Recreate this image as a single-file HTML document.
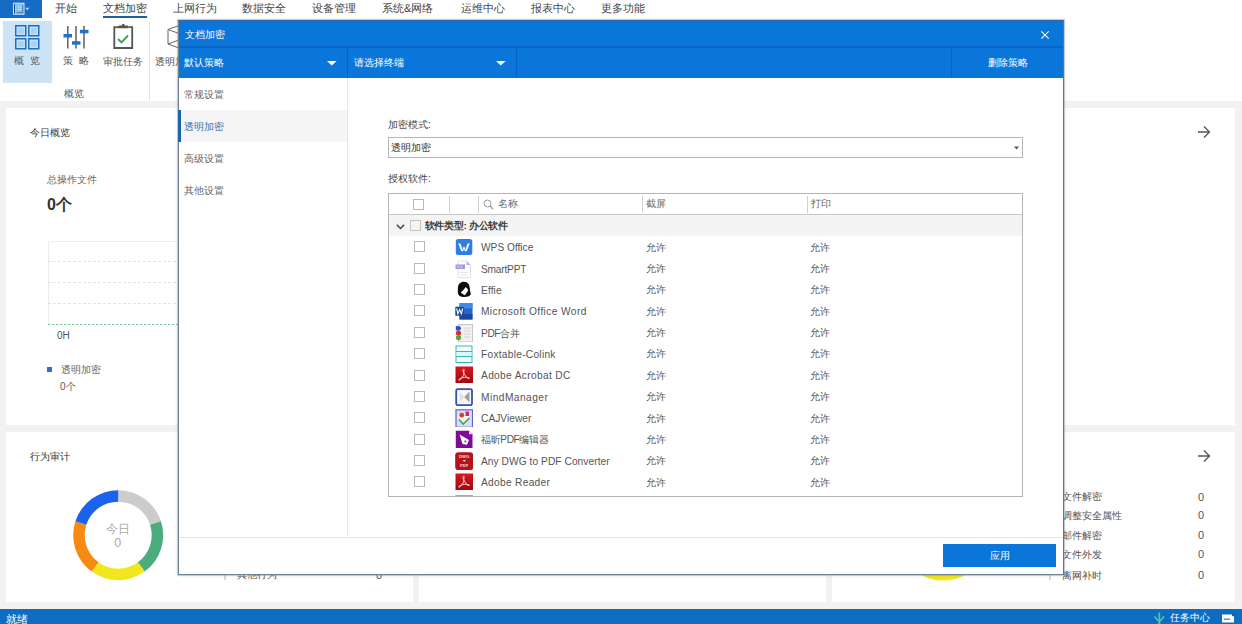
<!DOCTYPE html>
<html><head><meta charset="utf-8">
<style>
*{box-sizing:border-box}
html,body{margin:0;padding:0;width:1242px;height:624px;overflow:hidden;background:#f2f2f2;font-family:"Liberation Sans",sans-serif;color:#333}
.a{position:absolute;white-space:nowrap}
.t{position:absolute;white-space:nowrap;line-height:14px;height:14px}
#menubar{position:absolute;left:0;top:0;width:1242px;height:18px;background:#fff}
#ribbon{position:absolute;left:0;top:18px;width:1242px;height:83px;background:#fff}
.mi{position:absolute;top:1px;font-size:11px;line-height:14px;color:#444;white-space:nowrap}
.panel{position:absolute;background:#fff}
#status{position:absolute;left:0;top:609px;width:1242px;height:15px;background:#0f6dc1;border-top:1px solid #2a6795}
#dlg{position:absolute;left:178px;top:20px;width:886px;height:555px;background:#fff;border:1px solid #6e8391;border-top-color:#2f67a5;border-right-color:#4d79a8;box-shadow:0 0 0 1px rgba(130,150,165,.4),0 0 4px rgba(0,0,0,.15)}
.rl{font-size:10.2px;color:#555}
.cb{width:11px;height:11px;border:1px solid #b8b8b8;background:#fff}
.hd{font-size:10px;color:#666}
.rn{font-size:10.2px;color:#555}
</style></head><body>
<div id="menubar">
  <div class="a" style="left:0;top:0;width:42px;height:18px;background:#166bc5"></div>
  <svg class="a" style="left:12px;top:2px" width="22" height="14" viewBox="0 0 22 14"><rect x="1.5" y="1.2" width="10.5" height="11" fill="#8dbfe8" stroke="#c0e4ff" stroke-width="1.1"/><rect x="2.1" y="1.8" width="1.3" height="9.8" fill="#0d3f7a"/><path d="M3.6 1.8V11.6" stroke="#c0e4ff" stroke-width="0.8"/><path d="M4.5 10.8H11.3M10.8 3V10.8" stroke="#2f5f90" stroke-width="0.8"/><path d="M6 5H9.5M6 7.5H9.5" stroke="#c7e3f7" stroke-width="0.8"/><path d="M13 5.8H17.5L15.25 8.2Z" fill="#a8d8ff"/></svg>
  <div class="mi" style="left:55px">开始</div>
  <div class="mi" style="left:103px">文档加密</div>
  <div class="a" style="left:103px;top:16px;width:44px;height:2px;background:#1a5fa8"></div>
  <div class="mi" style="left:173px">上网行为</div>
  <div class="mi" style="left:242px">数据安全</div>
  <div class="mi" style="left:312px">设备管理</div>
  <div class="mi" style="left:382px">系统&amp;网络</div>
  <div class="mi" style="left:461px">运维中心</div>
  <div class="mi" style="left:531px">报表中心</div>
  <div class="mi" style="left:601px">更多功能</div>
</div>
<div id="ribbon">
  <div class="a" style="left:3px;top:3px;width:49px;height:62px;background:#cde3f6"></div>
  
  <svg class="a" style="left:13px;top:5px" width="28" height="28" viewBox="0 0 28 28">
    <rect x="2.75" y="2.75" width="10" height="10" fill="#a9d1f1" stroke="#1e6fbd" stroke-width="1.5"/>
    <rect x="15.75" y="2.75" width="10" height="10" fill="#a9d1f1" stroke="#1e6fbd" stroke-width="1.5"/>
    <rect x="2.75" y="15.75" width="10" height="10" fill="#a9d1f1" stroke="#1e6fbd" stroke-width="1.5"/>
    <rect x="15.75" y="15.75" width="10" height="10" fill="#a9d1f1" stroke="#1e6fbd" stroke-width="1.5"/>
    <rect x="4.25" y="4.25" width="7" height="7" fill="none" stroke="#d8ecfb" stroke-width="0.8"/>
    <rect x="17.25" y="4.25" width="7" height="7" fill="none" stroke="#d8ecfb" stroke-width="0.8"/>
    <rect x="4.25" y="17.25" width="7" height="7" fill="none" stroke="#d8ecfb" stroke-width="0.8"/>
    <rect x="17.25" y="17.25" width="7" height="7" fill="none" stroke="#d8ecfb" stroke-width="0.8"/>
  </svg>
  <svg class="a" style="left:62px;top:6px" width="28" height="26" viewBox="0 0 28 26">
    <path d="M5.8 2V24.5M14 2V24.5M22 2V24.5" stroke="#555" stroke-width="1.4"/>
    <rect x="1.5" y="10" width="8.5" height="3.5" fill="#1f72c6"/>
    <rect x="10" y="17.2" width="8.5" height="3.5" fill="#1f72c6"/>
    <rect x="18" y="5.8" width="8.5" height="3.5" fill="#1f72c6"/>
  </svg>
  <svg class="a" style="left:111px;top:5px" width="24" height="27" viewBox="0 0 24 27">
    <path d="M7 4.2H3.3V25H21.2V4.2H17.5" fill="none" stroke="#555" stroke-width="1.8"/>
    <path d="M7 5.2H17.5V3.8C17.5 3 16.5 2.5 15 2.5H13.7C13.7 1.5 13 0.8 12.25 0.8C11.5 0.8 10.8 1.5 10.8 2.5H9.5C8 2.5 7 3 7 3.8Z" fill="#555"/>
    <path d="M7 16L10.5 19.5L17 12.5" fill="none" stroke="#3a9f5a" stroke-width="1.9"/>
  </svg>
  <svg class="a" style="left:166px;top:5px" width="14" height="27" viewBox="0 0 14 27">
    <path d="M2 6.5L13 2.5M2 6.5V21L13 25M2 6.5L13 10.5M2 21L13 17" fill="none" stroke="#666" stroke-width="1"/>
  </svg>
  <div class="t rl" style="left:14px;top:36px">概&nbsp;&nbsp;览</div>
  <div class="t rl" style="left:63px;top:36px">策&nbsp;&nbsp;略</div>
  <div class="t rl" style="left:103px;top:37px">审批任务</div>
  <div class="t rl" style="left:155px;top:37px">透明加密</div>
  <div class="t rl" style="left:64px;top:69px">概览</div>
  <div class="a" style="left:149px;top:4px;width:1px;height:79px;background:#e6e6e6"></div>
</div>

<div class="panel" style="left:6px;top:108px;width:407px;height:317px"></div>
<div class="panel" style="left:419px;top:108px;width:407px;height:317px"></div>
<div class="panel" style="left:832px;top:108px;width:403px;height:317px"></div>
<div class="panel" style="left:6px;top:432px;width:407px;height:170px"></div>
<div class="panel" style="left:419px;top:432px;width:407px;height:170px"></div>
<div class="panel" style="left:832px;top:432px;width:403px;height:170px"></div>

<!-- panel 1 content -->
<div class="t" style="left:30px;top:126px;font-size:10px;color:#333">今日概览</div>
<div class="t" style="left:47px;top:173px;font-size:9.6px;color:#666">总操作文件</div>
<div class="t" style="left:47px;top:195.5px;height:18px;line-height:18px;font-size:16px;font-weight:bold;color:#333">0个</div>
<svg class="a" style="left:0;top:0" width="420" height="430">
  <path d="M48.5 241V324" stroke="#ececec" stroke-width="1"/>
  <path d="M48 241.5H420" stroke="#f0f0f0" stroke-width="1"/>
  <path d="M48 261.5H420M48 282.5H420M48 303.5H420" stroke="#e4e4e4" stroke-width="1" stroke-dasharray="3 2"/>
  <path d="M48 324.5H420" stroke="#8fc0a0" stroke-width="1" stroke-dasharray="2.5 1.5"/>
</svg>
<div class="t" style="left:57px;top:328.5px;font-size:10px;color:#555">0H</div>
<div class="a" style="left:47px;top:366.5px;width:5px;height:5px;background:#2f6fd0"></div>
<div class="t" style="left:60.5px;top:362.5px;font-size:9.5px;color:#666">透明加密</div>
<div class="t" style="left:60px;top:380px;font-size:10px;color:#555">0个</div>

<!-- panel 4 content -->
<div class="t" style="left:30px;top:450px;font-size:10px;color:#333">行为审计</div>
<svg class="a" style="left:0;top:0" width="1242" height="608"><path d="M118.20 490.20 A45.0 45.0 0 0 1 161.00 521.29 L150.06 524.85 A33.5 33.5 0 0 0 118.20 501.70 Z" fill="#cccccc"/><path d="M161.00 521.29 A45.0 45.0 0 0 1 144.65 571.61 L137.89 562.30 A33.5 33.5 0 0 0 150.06 524.85 Z" fill="#4cad7c"/><path d="M144.65 571.61 A45.0 45.0 0 0 1 91.75 571.61 L98.51 562.30 A33.5 33.5 0 0 0 137.89 562.30 Z" fill="#f2e61e"/><path d="M91.75 571.61 A45.0 45.0 0 0 1 75.40 521.29 L86.34 524.85 A33.5 33.5 0 0 0 98.51 562.30 Z" fill="#f68a12"/><path d="M75.40 521.29 A45.0 45.0 0 0 1 118.20 490.20 L118.20 501.70 A33.5 33.5 0 0 0 86.34 524.85 Z" fill="#1b62ee"/><path d="M943.30 490.60 A45.0 45.0 0 0 1 986.10 521.69 L975.16 525.25 A33.5 33.5 0 0 0 943.30 502.10 Z" fill="#cccccc"/><path d="M986.10 521.69 A45.0 45.0 0 0 1 969.75 572.01 L962.99 562.70 A33.5 33.5 0 0 0 975.16 525.25 Z" fill="#4cad7c"/><path d="M969.75 572.01 A45.0 45.0 0 0 1 916.85 572.01 L923.61 562.70 A33.5 33.5 0 0 0 962.99 562.70 Z" fill="#f2e61e"/><path d="M916.85 572.01 A45.0 45.0 0 0 1 900.50 521.69 L911.44 525.25 A33.5 33.5 0 0 0 923.61 562.70 Z" fill="#f68a12"/><path d="M900.50 521.69 A45.0 45.0 0 0 1 943.30 490.60 L943.30 502.10 A33.5 33.5 0 0 0 911.44 525.25 Z" fill="#1b62ee"/>
  <rect x="224" y="570" width="2" height="10" fill="#d8d8d8"/>
  <rect x="1049" y="570" width="2" height="10" fill="#d8d8d8"/>
</svg>
<div class="t" style="left:106.3px;top:522px;font-size:12px;color:#aaa">今日</div>
<div class="t" style="left:114.3px;top:536.2px;font-size:12.5px;color:#aaa">0</div>
<div class="t" style="left:237px;top:568px;font-size:10px;color:#555">其他行为</div>
<div class="t" style="left:376px;top:567.5px;font-size:11px;color:#555">0</div>

<!-- panel 3/6 -->
<svg class="a" style="left:1197px;top:125px" width="14" height="14" viewBox="0 0 14 14"><path d="M1 7H12.5M7 1.5L12.5 7L7 12.5" fill="none" stroke="#555" stroke-width="1.3"/></svg><svg class="a" style="left:1197px;top:449px" width="14" height="14" viewBox="0 0 14 14"><path d="M1 7H12.5M7 1.5L12.5 7L7 12.5" fill="none" stroke="#555" stroke-width="1.3"/></svg>
<div class="t" style="left:1062px;top:490px;font-size:10px;color:#555">文件解密</div>
<div class="t" style="left:1062px;top:509px;font-size:10px;color:#555">调整安全属性</div>
<div class="t" style="left:1062px;top:528.5px;font-size:10px;color:#555">邮件解密</div>
<div class="t" style="left:1062px;top:547.5px;font-size:10px;color:#555">文件外发</div>
<div class="t" style="left:1062px;top:568.5px;font-size:10px;color:#555">离网补时</div>
<div class="t" style="left:1198px;top:489.5px;font-size:11px;color:#555">0</div>
<div class="t" style="left:1198px;top:508px;font-size:11px;color:#555">0</div>
<div class="t" style="left:1198px;top:527.5px;font-size:11px;color:#555">0</div>
<div class="t" style="left:1198px;top:546.5px;font-size:11px;color:#555">0</div>
<div class="t" style="left:1198px;top:567.5px;font-size:11px;color:#555">0</div>

<div id="status">
  <div class="t" style="left:5.5px;top:1.5px;font-size:10.5px;color:#fff">就绪</div>
  <svg class="a" style="left:1153px;top:1.5px" width="13" height="14" viewBox="0 0 13 14"><path d="M6.3 0.5V14" stroke="#5cbfa6" stroke-width="1.7"/><path d="M1.5 4.5L6.3 9.8L11.1 4.5" fill="none" stroke="#5cbfa6" stroke-width="1.7"/><path d="M6.3 11V14" stroke="#5cc27a" stroke-width="2"/></svg>
  <div class="t" style="left:1170px;top:1px;font-size:10px;color:#fff">任务中心</div>
  <svg class="a" style="left:1222px;top:4px" width="13" height="9" viewBox="0 0 13 9"><rect x="0" y="0.5" width="12" height="8" fill="#fff"/><rect x="2" y="4.5" width="6" height="1.5" fill="#7a8ca0"/><rect x="10" y="0" width="2" height="2.2" fill="#1a5fa8"/></svg>
</div>

<div id="dlg">
  <!-- title bar -->
  <div class="a" style="left:0;top:0;width:884px;height:25px;background:#0b76da"></div>
  <div class="a" style="left:0;top:25px;width:884px;height:2px;background:#0964c4"></div>
  <div class="a" style="left:0;top:27px;width:884px;height:30px;background:#0b76da"></div>
  <div class="t" style="left:6px;top:7px;font-size:10px;color:#fff">文档加密</div>
  <svg class="a" style="left:860.5px;top:8.5px" width="10" height="10" viewBox="0 0 10 10"><path d="M1.3 1.3L8.7 8.7M8.7 1.3L1.3 8.7" stroke="#fff" stroke-width="1.1"/></svg>
  <div class="t" style="left:5px;top:35px;font-size:10px;color:#fff">默认策略</div>
  <svg class="a" style="left:147.5px;top:39.5px" width="10" height="5" viewBox="0 0 10 5"><path d="M0 0H9.6L4.8 4.6Z" fill="#fff"/></svg>
  <div class="a" style="left:168px;top:27px;width:1px;height:30px;background:#0862bd"></div>
  <div class="t" style="left:175px;top:35px;font-size:10px;color:#fff">请选择终端</div>
  <svg class="a" style="left:317px;top:39.5px" width="10" height="5" viewBox="0 0 10 5"><path d="M0 0H9.6L4.8 4.6Z" fill="#fff"/></svg>
  <div class="a" style="left:337px;top:27px;width:1px;height:30px;background:#0862bd"></div>
  <div class="a" style="left:772px;top:27px;width:1px;height:30px;background:#0862bd"></div>
  <div class="t" style="left:809px;top:35px;font-size:10px;color:#fff">删除策略</div>

  <!-- left nav -->
  <div class="a" style="left:168px;top:57px;width:1px;height:458px;background:#e8e8e8"></div>
  <div class="t" style="left:5px;top:66.8px;font-size:10.4px;color:#666">常规设置</div>
  <div class="a" style="left:0;top:89px;width:168px;height:32px;background:#f5f5f5"></div>
  <div class="a" style="left:-1px;top:89px;width:3px;height:32px;background:#1a66ad"></div>
  <div class="t" style="left:5px;top:98.8px;font-size:10.4px;color:#3572b5">透明加密</div>
  <div class="t" style="left:5px;top:130.8px;font-size:10.4px;color:#666">高级设置</div>
  <div class="t" style="left:5px;top:162.8px;font-size:10.4px;color:#666">其他设置</div>

  <!-- content -->
  <div class="t" style="left:209px;top:97px;font-size:10px;color:#444">加密模式:</div>
  <div class="a" style="left:209px;top:116px;width:635px;height:21px;border:1px solid #b5b5b5"></div>
  <div class="t" style="left:212px;top:120px;font-size:10px;color:#333">透明加密</div>
  <svg class="a" style="left:835px;top:125px" width="5" height="4" viewBox="0 0 5 4"><path d="M0 0.5H5L2.5 3.5Z" fill="#555"/></svg>
  <div class="t" style="left:209px;top:151px;font-size:10px;color:#444">授权软件:</div>

  <div id="tbl" class="a" style="left:209px;top:172px;width:635px;height:304px;border:1px solid #b5b5b5;overflow:hidden">
    <div class="a" style="left:0;top:20px;width:633px;height:1px;background:#c8c8c8"></div>
    <div class="a cb" style="left:24px;top:4.5px"></div>
    <div class="a" style="left:60px;top:2px;width:1px;height:17px;background:#d0d0d0"></div>
    <div class="a" style="left:89px;top:2px;width:1px;height:17px;background:#d0d0d0"></div>
    <div class="a" style="left:253px;top:2px;width:1px;height:17px;background:#d0d0d0"></div>
    <div class="a" style="left:418px;top:2px;width:1px;height:17px;background:#d0d0d0"></div>
    <svg class="a" style="left:94px;top:5px" width="11" height="11" viewBox="0 0 11 11"><circle cx="4.5" cy="4.5" r="3.5" fill="none" stroke="#9a9a9a" stroke-width="1"/><path d="M7 7L10 10" stroke="#9a9a9a" stroke-width="1.2"/></svg>
    <div class="t hd" style="left:109px;top:3px">名称</div>
    <div class="t hd" style="left:257px;top:3px">截屏</div>
    <div class="t hd" style="left:422px;top:3px">打印</div>
    <div class="a" style="left:0;top:21px;width:633px;height:20.5px;background:#f4f4f4"></div>
    <svg class="a" style="left:6.5px;top:29.5px" width="9" height="6" viewBox="0 0 9 6"><path d="M0.8 0.8L4.5 4.5L8.2 0.8" fill="none" stroke="#444" stroke-width="1.5"/></svg>
    <div class="a cb" style="left:21px;top:26px;background:transparent;border-color:#c4c4c4"></div>
    <div class="t" style="left:35.5px;top:25.2px;font-size:9.7px;font-weight:bold;color:#3a3a3a;letter-spacing:-0.25px">软件类型: 办公软件</div>
    <div class="a cb" style="left:25px;top:47.40px"></div>
    <div class="a" style="left:66px;top:44.30px;width:18px;height:18px"><svg width="18" height="18" viewBox="0 0 18 18"><rect x="0.8" y="1" width="16.5" height="16" rx="2.5" fill="#2f7de6"/><path d="M3.2 5.5H5.8L7.6 10.8L9 8.2L10.4 10.8L12.2 5.5H14.8L11.6 13.2H10L9 11.2L8 13.2H6.4Z" fill="#fff"/><path d="M5.8 5.5L7.9 12M12.2 5.5L10.1 12" stroke="#2f7de6" stroke-width="0.7"/></svg></div>
    <div class="t rn" style="left:92px;top:47.30px;letter-spacing:-0.017px">WPS Office</div>
    <div class="t rn" style="left:257px;top:46.70px">允许</div>
    <div class="t rn" style="left:421px;top:46.70px">允许</div>
    <div class="a cb" style="left:25px;top:68.75px"></div>
    <div class="a" style="left:66px;top:65.65px;width:18px;height:18px"><svg width="18" height="18" viewBox="0 0 18 18"><path d="M3 1H11.5L15.5 5V17.5H3Z" fill="#fff" stroke="#dcd8ea" stroke-width="0.9"/><path d="M11.5 1V5H15.5Z" fill="#b9aee0"/><rect x="0.5" y="4.5" width="9.5" height="4.5" fill="#a895dd"/><rect x="2" y="6" width="2" height="1.5" fill="#d6ccf3"/><rect x="5" y="6" width="2" height="1.5" fill="#d6ccf3"/><path d="M5 12.5H13M5 15H13" stroke="#e4e0f0" stroke-width="0.9"/></svg></div>
    <div class="t rn" style="left:92px;top:68.65px;letter-spacing:-0.210px">SmartPPT</div>
    <div class="t rn" style="left:257px;top:68.05px">允许</div>
    <div class="t rn" style="left:421px;top:68.05px">允许</div>
    <div class="a cb" style="left:25px;top:90.10px"></div>
    <div class="a" style="left:66px;top:87.00px;width:18px;height:18px"><svg width="18" height="18" viewBox="0 0 18 18"><path d="M9 0.8C5.5 0.8 3 3.2 2.9 7C2.8 9.5 2.6 12 3.5 13.8C4.6 15.8 7 16 9.5 15.9C12 15.8 14.6 15.6 15.6 13.8C16 12.5 15.3 11 15 9C14.7 6.5 14.6 4.5 13.5 3C12.4 1.5 10.8 0.8 9 0.8Z" fill="#0b0b0b"/><path d="M5.8 11.3C7.5 9.8 9.3 8.2 10.6 6C11.8 6.8 12.8 8 13.2 9.3C12.4 11 11.2 12.8 9.6 14.2C8.2 13.6 6.8 12.5 5.8 11.3Z" fill="#f6f6f6"/></svg></div>
    <div class="t rn" style="left:92px;top:90.00px;letter-spacing:0.100px">Effie</div>
    <div class="t rn" style="left:257px;top:89.40px">允许</div>
    <div class="t rn" style="left:421px;top:89.40px">允许</div>
    <div class="a cb" style="left:25px;top:111.45px"></div>
    <div class="a" style="left:66px;top:108.35px;width:18px;height:18px"><svg width="18" height="18" viewBox="0 0 18 18"><rect x="4.5" y="1" width="13" height="16.5" rx="0.8" fill="#2b63c6"/><rect x="4.5" y="1" width="13" height="5.5" fill="#4189e4"/><rect x="4.5" y="12" width="13" height="5.5" fill="#1a489c"/><rect x="0.3" y="4.8" width="8.7" height="9" rx="0.6" fill="#1b4a9e"/><path d="M1.6 6.5L2.9 11.8L4.65 7.6L6.4 11.8L7.7 6.5" fill="none" stroke="#fff" stroke-width="1.1"/></svg></div>
    <div class="t rn" style="left:92px;top:111.35px;letter-spacing:0.388px">Microsoft Office Word</div>
    <div class="t rn" style="left:257px;top:110.75px">允许</div>
    <div class="t rn" style="left:421px;top:110.75px">允许</div>
    <div class="a cb" style="left:25px;top:132.80px"></div>
    <div class="a" style="left:66px;top:129.70px;width:18px;height:18px"><svg width="18" height="18" viewBox="0 0 18 18"><rect x="3.5" y="0.5" width="14" height="17.5" fill="#f0f0f0" stroke="#c6c6c6" stroke-width="1"/><path d="M9 4H15.5M9 7H15.5M9 10H15.5M9 13H15.5" stroke="#d4d4d4" stroke-width="0.9"/><path d="M0.8 1.8L6 4.3L0.8 6.8Z" fill="#2d4fc4"/><circle cx="3.5" cy="4.3" r="2.4" fill="#2d4fc4"/><circle cx="3.5" cy="9" r="2.6" fill="#d8302a"/><circle cx="3.5" cy="13.6" r="2.6" fill="#4aa646"/></svg></div>
    <div class="t rn" style="left:92px;top:132.70px;letter-spacing:-0.395px">PDF合并</div>
    <div class="t rn" style="left:257px;top:132.10px">允许</div>
    <div class="t rn" style="left:421px;top:132.10px">允许</div>
    <div class="a cb" style="left:25px;top:154.15px"></div>
    <div class="a" style="left:66px;top:151.05px;width:18px;height:18px"><svg width="18" height="18" viewBox="0 0 18 18"><rect x="1" y="1" width="16" height="16.5" fill="#f4feff" stroke="#38b4c4" stroke-width="1"/><rect x="1.5" y="6.5" width="15" height="5" fill="#d9f7fa"/><path d="M1 6.5H17M1 11.5H17" stroke="#38b4c4" stroke-width="1"/></svg></div>
    <div class="t rn" style="left:92px;top:154.05px;letter-spacing:0.261px">Foxtable-Colink</div>
    <div class="t rn" style="left:257px;top:153.45px">允许</div>
    <div class="t rn" style="left:421px;top:153.45px">允许</div>
    <div class="a cb" style="left:25px;top:175.50px"></div>
    <div class="a" style="left:66px;top:172.40px;width:18px;height:18px"><svg width="18" height="18" viewBox="0 0 18 18"><defs><linearGradient id="ag" x1="0" y1="0" x2="0" y2="1"><stop offset="0" stop-color="#d8161c"/><stop offset="1" stop-color="#9c0a10"/></linearGradient></defs><rect x="0.5" y="0.5" width="17.5" height="16.5" fill="url(#ag)"/><path d="M8.6 2.8C7.6 3 8 5.8 9 8C8.2 10.3 6.2 13.4 4.3 14.2C3.2 14.6 3.6 13.2 5.5 12.3C7.6 11.4 11.4 11 13.6 11.6C15 12 14.4 13.1 13 12.3C11.4 11.3 9.8 9.2 9.1 7.4C8.7 6 8.6 3.6 9.4 3.2" fill="none" stroke="#f8d0d0" stroke-width="1"/></svg></div>
    <div class="t rn" style="left:92px;top:175.40px;letter-spacing:0.332px">Adobe Acrobat DC</div>
    <div class="t rn" style="left:257px;top:174.80px">允许</div>
    <div class="t rn" style="left:421px;top:174.80px">允许</div>
    <div class="a cb" style="left:25px;top:196.85px"></div>
    <div class="a" style="left:66px;top:193.75px;width:18px;height:18px"><svg width="18" height="18" viewBox="0 0 18 18"><rect x="1.2" y="1.2" width="15.8" height="16" rx="1.6" fill="#f8f8f8" stroke="#3552ad" stroke-width="1.8"/><path d="M4 3.5L9.2 9L4 14.5Z" fill="#e0e0e0"/><path d="M14.5 3.5L9.2 9L14.5 14.5Z" fill="#a0a0a0"/><path d="M4 3.5V14.5" stroke="#fff" stroke-width="1"/></svg></div>
    <div class="t rn" style="left:92px;top:196.75px;letter-spacing:0.455px">MindManager</div>
    <div class="t rn" style="left:257px;top:196.15px">允许</div>
    <div class="t rn" style="left:421px;top:196.15px">允许</div>
    <div class="a cb" style="left:25px;top:218.20px"></div>
    <div class="a" style="left:66px;top:215.10px;width:18px;height:18px"><svg width="18" height="18" viewBox="0 0 18 18"><rect x="1" y="0.8" width="16.5" height="17.5" fill="#dcdcf6" stroke="#5a66c8" stroke-width="1.2"/><path d="M3.5 6L10 3.5L15 8.5L9.5 15.5L3.5 11Z" fill="#f6f6f6"/><circle cx="6.8" cy="6.2" r="2.4" fill="#d9412e"/><rect x="10.5" y="2.5" width="3.5" height="4.5" fill="#c02a7a"/><path d="M4 10.5L8.2 15L14.5 9" fill="none" stroke="#38a84a" stroke-width="1.6"/></svg></div>
    <div class="t rn" style="left:92px;top:218.10px;letter-spacing:0.022px">CAJViewer</div>
    <div class="t rn" style="left:257px;top:217.50px">允许</div>
    <div class="t rn" style="left:421px;top:217.50px">允许</div>
    <div class="a cb" style="left:25px;top:239.55px"></div>
    <div class="a" style="left:66px;top:236.45px;width:18px;height:18px"><svg width="18" height="18" viewBox="0 0 18 18"><path d="M0.8 0.8H14L17.5 4.3V18H0.8Z" fill="#7c0c97"/><path d="M14 0.8V4.3H17.5Z" fill="#f7d6f3"/><path d="M4.5 4.5L14 10L12 14.8L7.5 14Z" fill="#fff"/><circle cx="10.3" cy="11.4" r="0.9" fill="#7c0c97"/></svg></div>
    <div class="t rn" style="left:92px;top:239.45px;letter-spacing:-0.384px">福昕PDF编辑器</div>
    <div class="t rn" style="left:257px;top:238.85px">允许</div>
    <div class="t rn" style="left:421px;top:238.85px">允许</div>
    <div class="a cb" style="left:25px;top:260.90px"></div>
    <div class="a" style="left:66px;top:257.80px;width:18px;height:18px"><svg width="18" height="18" viewBox="0 0 18 18"><rect x="0.2" y="0.2" width="18" height="18" rx="3.2" fill="#b5121b"/><text x="9.2" y="6.3" font-size="4.2" font-family="Liberation Sans" font-weight="bold" fill="#f3d7d7" text-anchor="middle">DWG</text><path d="M7.5 8H11L9.25 10Z" fill="#f3d7d7"/><text x="9.2" y="14.8" font-size="4.2" font-family="Liberation Sans" font-weight="bold" fill="#f3d7d7" text-anchor="middle">PDF</text></svg></div>
    <div class="t rn" style="left:92px;top:260.80px;letter-spacing:0.055px">Any DWG to PDF Converter</div>
    <div class="t rn" style="left:257px;top:260.20px">允许</div>
    <div class="t rn" style="left:421px;top:260.20px">允许</div>
    <div class="a cb" style="left:25px;top:282.25px"></div>
    <div class="a" style="left:66px;top:279.15px;width:18px;height:18px"><svg width="18" height="18" viewBox="0 0 18 18"><defs><linearGradient id="ag" x1="0" y1="0" x2="0" y2="1"><stop offset="0" stop-color="#d8161c"/><stop offset="1" stop-color="#9c0a10"/></linearGradient></defs><rect x="0.5" y="0.5" width="17.5" height="16.5" fill="url(#ag)"/><path d="M8.6 2.8C7.6 3 8 5.8 9 8C8.2 10.3 6.2 13.4 4.3 14.2C3.2 14.6 3.6 13.2 5.5 12.3C7.6 11.4 11.4 11 13.6 11.6C15 12 14.4 13.1 13 12.3C11.4 11.3 9.8 9.2 9.1 7.4C8.7 6 8.6 3.6 9.4 3.2" fill="none" stroke="#f8d0d0" stroke-width="1"/></svg></div>
    <div class="t rn" style="left:92px;top:282.15px;letter-spacing:0.292px">Adobe Reader</div>
    <div class="t rn" style="left:257px;top:281.55px">允许</div>
    <div class="t rn" style="left:421px;top:281.55px">允许</div>
    <div class="a cb" style="left:25px;top:303.60px"></div>
    <div class="a" style="left:66px;top:300.50px;width:18px;height:18px"><svg width="18" height="18" viewBox="0 0 18 18"><defs><linearGradient id="ag" x1="0" y1="0" x2="0" y2="1"><stop offset="0" stop-color="#d8161c"/><stop offset="1" stop-color="#9c0a10"/></linearGradient></defs><rect x="0.5" y="0.5" width="17.5" height="16.5" fill="url(#ag)"/><path d="M8.6 2.8C7.6 3 8 5.8 9 8C8.2 10.3 6.2 13.4 4.3 14.2C3.2 14.6 3.6 13.2 5.5 12.3C7.6 11.4 11.4 11 13.6 11.6C15 12 14.4 13.1 13 12.3C11.4 11.3 9.8 9.2 9.1 7.4C8.7 6 8.6 3.6 9.4 3.2" fill="none" stroke="#f8d0d0" stroke-width="1"/></svg></div>
  </div>

  <!-- footer -->
  <div class="a" style="left:0;top:516px;width:884px;height:1px;background:#e6e6e6"></div>
  <div class="a" style="left:764px;top:523px;width:113px;height:23px;background:#0b76da"></div>
  <div class="t" style="left:764px;top:528px;width:113px;text-align:center;font-size:10px;color:#fff">应用</div>
</div>
</body></html>
